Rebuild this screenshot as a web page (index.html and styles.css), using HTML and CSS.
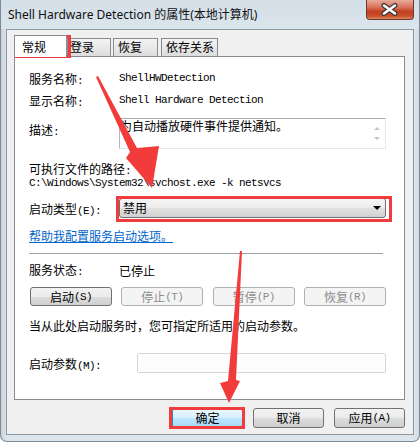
FILE: index.html
```html
<!DOCTYPE html>
<html>
<head>
<meta charset="utf-8">
<link rel="stylesheet" href="styles.css">
</head>
<body>
<div class="window">
  <div class="titlebar">
    <span class="title">Shell Hardware Detection 的属性(本地计算机)</span>
    <div class="close">
      <svg width="48" height="20" viewBox="0 0 48 20">
        <path d="M18 5.5 L29 13.5 M29 5.5 L18 13.5" stroke="#3a3a3a" stroke-width="5" stroke-linecap="round"/>
        <path d="M18 5.5 L29 13.5 M29 5.5 L18 13.5" stroke="#ffffff" stroke-width="2.6" stroke-linecap="round"/>
      </svg>
    </div>
  </div>
  <div class="client">
    <div class="tabs">
      <div class="tab active">常规</div>
      <div class="tab t2">登录</div>
      <div class="tab t3">恢复</div>
      <div class="tab t4">依存关系</div>
    </div>
    <div class="panel">
      <div class="row r-line"><span class="label">服务名称<span class="m">:</span></span><span class="m">ShellHWDetection</span></div>
      <div class="row r-line"><span class="label">显示名称<span class="m">:</span></span><span class="m">Shell Hardware Detection</span></div>
      <div class="row r-desc">
        <span class="label desc-label">描述<span class="m">:</span></span>
        <div class="desc">
          <div class="desc-text">为自动播放硬件事件提供通知。</div>
          <div class="vscroll"><span class="up"></span><span class="down"></span></div>
        </div>
      </div>
      <div class="line path-label">可执行文件的路径<span class="m">:</span></div>
      <div class="line m path">C:\Windows\System32\svchost.exe -k netsvcs</div>
      <div class="row r-type">
        <span class="label">启动类型<span class="m">(E):</span></span>
        <div class="combo"><span>禁用</span><span class="caret"></span></div>
      </div>
      <div class="line link">帮助我配置服务启动选项。</div>
      <div class="sep"></div>
      <div class="row line status"><span class="label">服务状态<span class="m">:</span></span><span>已停止</span></div>
      <div class="btnrow">
        <div class="btn">启动<span class="m">(S)</span></div>
        <div class="btn disabled">停止<span class="m">(T)</span></div>
        <div class="btn disabled">暂停<span class="m">(P)</span></div>
        <div class="btn disabled">恢复<span class="m">(R)</span></div>
      </div>
      <div class="line hint">当从此处启动服务时，您可指定所适用的启动参数。</div>
      <div class="row r-param">
        <span class="label wide">启动参数<span class="m">(M):</span></span>
        <div class="input"></div>
      </div>
    </div>
    <div class="actions">
      <div class="btn big default">确定</div>
      <div class="btn big">取消</div>
      <div class="btn big">应用<span class="m">(A)</span></div>
    </div>
  </div>
  <div class="mark mark-tab"></div>
  <div class="mark mark-combo"></div>
  <div class="mark mark-ok"></div>
  <svg class="arrows" width="420" height="442" viewBox="0 0 420 442">
    <polygon points="96,77 98,76 137,148 159,146 152,188 126,158 130,152" fill="#f23b3b"/>
    <polygon points="240,251 242,251 236,380 240,381 229,403 220,383 228,381" fill="#f23b3b"/>
  </svg>
</div>
</body>
</html>
```

FILE: styles.css
```css
html, body {
  margin: 0;
  padding: 0;
}
body {
  width: 420px;
  height: 442px;
  overflow: hidden;
  font-family: "Noto Sans CJK SC", sans-serif;
  font-size: 12px;
  color: #000;
  background: #ffffff;
}
.window {
  position: relative;
  width: 420px;
  height: 442px;
  box-sizing: border-box;
  border: 1px solid #7d8a95;
  border-top: none;
  border-radius: 0 0 7px 7px;
  background: linear-gradient(90deg, #c9d3d9 0px, #dde6ec 6px, #dde6ec 413px, #cfd9df 420px);
  display: flex;
  flex-direction: column;
}
.titlebar {
  height: 29px;
  display: flex;
  align-items: flex-start;
  flex: none;
  background: linear-gradient(#d3dee7, #dbe5ec);
}
.title {
  padding-left: 7px;
  margin-top: 7px;
  line-height: 16px;
  font-family: "Noto Sans", "Noto Sans CJK SC", sans-serif;
  font-size: 12px;
  color: #111;
  white-space: nowrap;
}
.close {
  margin-left: auto;
  margin-right: 5px;
  width: 48px;
  height: 20px;
  box-sizing: border-box;
  border: 1px solid #6b3a30;
  border-top: none;
  border-radius: 0 0 4px 4px;
  background: linear-gradient(#e9ab9c 0%, #d86f58 40%, #c4401f 60%, #c9502e 85%, #e08a5a 100%);
  overflow: hidden;
}
.close svg {
  display: block;
  margin-left: -1px;
}
.client {
  margin: 0 5px;
  height: 406px;
  flex: none;
  box-sizing: border-box;
  border: 1px solid #8c99a4;
  background: #f0f0f0;
  padding: 5px 8px 0 7px;
  display: flex;
  flex-direction: column;
}
.tabs {
  display: flex;
  align-items: flex-end;
  height: 21px;
  flex: none;
}
.tab {
  height: 18px;
  box-sizing: border-box;
  border: 1px solid #898c95;
  border-bottom: none;
  background: linear-gradient(#f3f3f3, #e6e6e6 60%, #dcdcdc);
  line-height: 16px;
  white-space: nowrap;
}
.tab.active {
  height: 22px;
  margin-bottom: -1px;
  width: 53px;
  padding-left: 7px;
  background: #ffffff;
  position: relative;
  z-index: 1;
  line-height: 22px;
}
.tab.t2 { width: 44px; padding-left: 2px; }
.tab.t3 { width: 45px; padding-left: 4px; margin-left: 2px; }
.tab.t4 { width: 57px; padding-left: 4px; margin-left: 3px; }
.panel {
  height: 344px;
  flex: none;
  box-sizing: border-box;
  border: 1px solid #898c95;
  background: #ffffff;
  padding: 10px 18px 0 14px;
  display: flex;
  flex-direction: column;
}
.m {
  font-family: "Liberation Mono", monospace;
  font-size: 11px;
  letter-spacing: -0.6px;
}
.row {
  display: flex;
  align-items: center;
}
.label {
  width: 90px;
  flex: none;
  white-space: nowrap;
}
.label.wide { width: 108px; }
.r-line {
  height: 22px;
}
.line {
  height: 14px;
  line-height: 14px;
  white-space: nowrap;
}
.r-desc {
  margin-top: 7px;
  align-items: flex-start;
  height: 31px;
}
.desc-label {
  padding-top: 5px;
  line-height: 14px;
}
.desc {
  flex: 1;
  height: 31px;
  box-sizing: border-box;
  border: 1px solid;
  border-color: #abadb3 #e3e9ef #e3e9ef #b4b7bc;
  display: flex;
}
.desc-text {
  flex: 1;
  line-height: 14px;
  white-space: nowrap;
}
.vscroll {
  width: 17px;
  display: flex;
  flex-direction: column;
  align-items: center;
  justify-content: space-around;
  padding: 4px 0;
  box-sizing: border-box;
}
.up, .down {
  width: 0;
  height: 0;
  border-left: 3px solid transparent;
  border-right: 3px solid transparent;
}
.up { border-bottom: 3px solid #c4c4c4; }
.down { border-top: 3px solid #c4c4c4; }
.path-label { margin-top: 13px; }
.path { font-size: 11px; }
.r-type {
  margin-top: 8px;
  height: 20px;
}
.combo {
  flex: 1;
  height: 20px;
  box-sizing: border-box;
  border: 1px solid #707070;
  border-radius: 3px;
  background: linear-gradient(#f4f4f4 0%, #ececec 50%, #e0e0e0 50%, #d3d3d3 100%);
  padding-left: 3px;
  display: flex;
  align-items: center;
  line-height: 14px;
}
.caret {
  margin-left: auto;
  margin-right: 4px;
  width: 0;
  height: 0;
  border-left: 4px solid transparent;
  border-right: 4px solid transparent;
  border-top: 4px solid #000;
}
.link {
  margin-top: 11px;
  color: #0066cc;
  text-decoration: underline;
  align-self: flex-start;
}
.sep {
  margin-top: 10px;
  margin-right: 3px;
  height: 0;
  border-top: 1px solid #a0a0a0;
  border-bottom: 1px solid #ffffff;
}
.status { margin-top: 9px; }
.btnrow {
  margin-top: 9px;
  margin-left: 1px;
  display: flex;
  justify-content: space-between;
}
.btn {
  height: 19px;
  width: 82px;
  box-sizing: border-box;
  border: 1px solid #707070;
  border-radius: 3px;
  background: linear-gradient(#f2f2f2 0%, #ebebeb 50%, #dddddd 50%, #cfcfcf 100%);
  display: flex;
  align-items: center;
  justify-content: center;
  line-height: 14px;
  white-space: nowrap;
}
.btn.disabled {
  border-color: #adb2b5;
  background: #f4f4f4;
  color: #8d8d8d;
}
.hint { margin-top: 13px; }
.r-param {
  margin-top: 20px;
  height: 20px;
}
.input {
  flex: 1;
  height: 20px;
  box-sizing: border-box;
  border: 1px solid #d3d5d9;
  border-radius: 2px;
  background: #fdfdfd;
}
.actions {
  margin-top: 8px;
  display: flex;
  justify-content: flex-end;
  gap: 10px;
}
.btn.big {
  width: 71px;
  height: 20px;
}
.btn.default {
  border-color: #3c7fb1;
  background: linear-gradient(#eaf6fd 0%, #d9f0fc 50%, #bee6fd 50%, #a7d9f5 100%);
}
.mark {
  position: absolute;
  box-sizing: border-box;
  border: 3px solid #f03c3c;
  pointer-events: none;
}
.mark-tab { left: 14px; top: 35px; width: 56px; height: 23px; }
.mark-combo { left: 115px; top: 196px; width: 276px; height: 26px; }
.mark-ok { left: 168px; top: 407px; width: 76px; height: 22px; }
.arrows {
  position: absolute;
  left: -1px;
  top: 0;
  pointer-events: none;
}
```
